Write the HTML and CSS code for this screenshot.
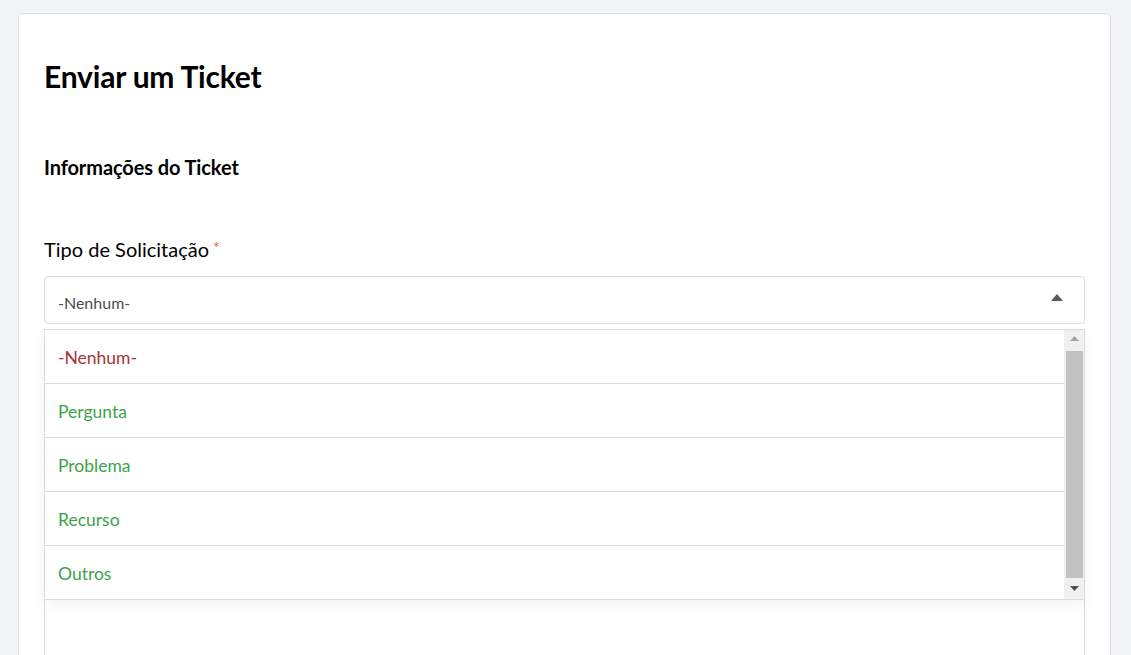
FILE: index.html
```html
<!DOCTYPE html>
<html lang="pt">
<head>
<meta charset="utf-8">
<title>Enviar um Ticket</title>
<link rel="stylesheet" href="styles.css">
</head>
<body>
<div class="card">
  <h1 class="title">Enviar um Ticket</h1>
  <h2 class="section">Informações do Ticket</h2>
  <div class="field">
    <label class="label">Tipo de Solicitação<span class="req">*</span></label>
    <div class="select-wrap">
      <div class="select">
        <span class="select-value">-Nenhum-</span>
        <svg class="caret" width="12" height="8" viewBox="0 0 12 8"><path d="M0 8 L6 1 L12 8 Z" fill="#5a5a5a"/></svg>
      </div>
      <div class="dropdown">
        <ul class="options">
          <li class="opt opt-none">-Nenhum-</li>
          <li class="opt">Pergunta</li>
          <li class="opt">Problema</li>
          <li class="opt">Recurso</li>
          <li class="opt">Outros</li>
        </ul>
        <div class="scrollbar">
          <svg class="sb-arrow" width="9" height="5" viewBox="0 0 9 5"><path d="M0 5 L4.5 0 L9 5 Z" fill="#a3a3a3"/></svg>
          <div class="thumb"></div>
          <svg class="sb-arrow" width="9" height="5" viewBox="0 0 9 5"><path d="M0 0 L9 0 L4.5 5 Z" fill="#505050"/></svg>
        </div>
      </div>
    </div>
  </div>
  <div class="field-hidden">
    <div class="textarea"></div>
  </div>
</div>
</body>
</html>
```

FILE: styles.css
```css
html, body {
  margin: 0;
  padding: 0;
}
body {
  background: #f3f4f6;
  font-family: Lato, "Noto Sans", Arial, sans-serif;
  color: #000;
  padding: 13px 20px 0 18px;
  height: 655px;
  box-sizing: border-box;
  overflow: hidden;
}
.card {
  background: #fff;
  border: 1px solid #dcdde0;
  border-radius: 4px;
  padding: 42px 25px 40px 25px;
  min-height: 800px;
}
.title {
  margin: 0;
  font-size: 30px;
  font-weight: 700;
  line-height: 40px;
  letter-spacing: -0.2px;
}
.section {
  margin: 59px 0 0 0;
  font-size: 20px;
  font-weight: 700;
  line-height: 24px;
  letter-spacing: -0.1px;
}
.field {
  margin-top: 58px;
}
.field-hidden {
  margin-top: 160px;
}
.label {
  display: block;
  font-size: 20px;
  line-height: 24px;
  margin-bottom: 15px;
}
.req {
  color: #e5652e;
  font-size: 16px;
  margin-left: 4px;
  vertical-align: top;
  position: relative;
  top: -2px;
}
.select-wrap {
  position: relative;
}
.select {
  height: 48px;
  box-sizing: border-box;
  border: 1px solid #dcdcdc;
  border-radius: 4px;
  display: flex;
  align-items: center;
  justify-content: space-between;
  padding: 0 21px 0 13px;
}
.select-value {
  font-size: 16px;
  color: #4d4d4d;
  position: relative;
  top: 2px;
}
.caret {
  display: block;
  margin-top: -6px;
}
.dropdown {
  position: absolute;
  left: 0;
  right: 0;
  top: 53px;
  background: #fff;
  border: 1px solid #dcdcdc;
  display: flex;
  box-shadow: 0 6px 14px rgba(0,0,0,0.05);
  z-index: 5;
}
.options {
  list-style: none;
  margin: 0;
  padding: 0;
  flex: 1;
}
.opt {
  height: 54px;
  box-sizing: border-box;
  border-bottom: 1px solid #dcdcdc;
  display: flex;
  align-items: center;
  padding-left: 13px;
  padding-top: 2px;
  font-size: 17.5px;
  color: #3ca34a;
}
.opt:last-child {
  border-bottom: none;
  height: 53px;
}
.opt-none {
  color: #a8323a;
}
.scrollbar {
  width: 20px;
  background: #f0f0f0;
  display: flex;
  flex-direction: column;
  align-items: center;
  padding: 6px 0 8px;
  box-sizing: border-box;
}
.sb-arrow {
  display: block;
  flex: none;
}
.thumb {
  width: 17px;
  flex: 1;
  background: #c1c1c1;
  margin: 10px 0 8px;
}
.textarea {
  height: 200px;
  border: 1px solid #dcdcdc;
  border-radius: 4px;
}
```
